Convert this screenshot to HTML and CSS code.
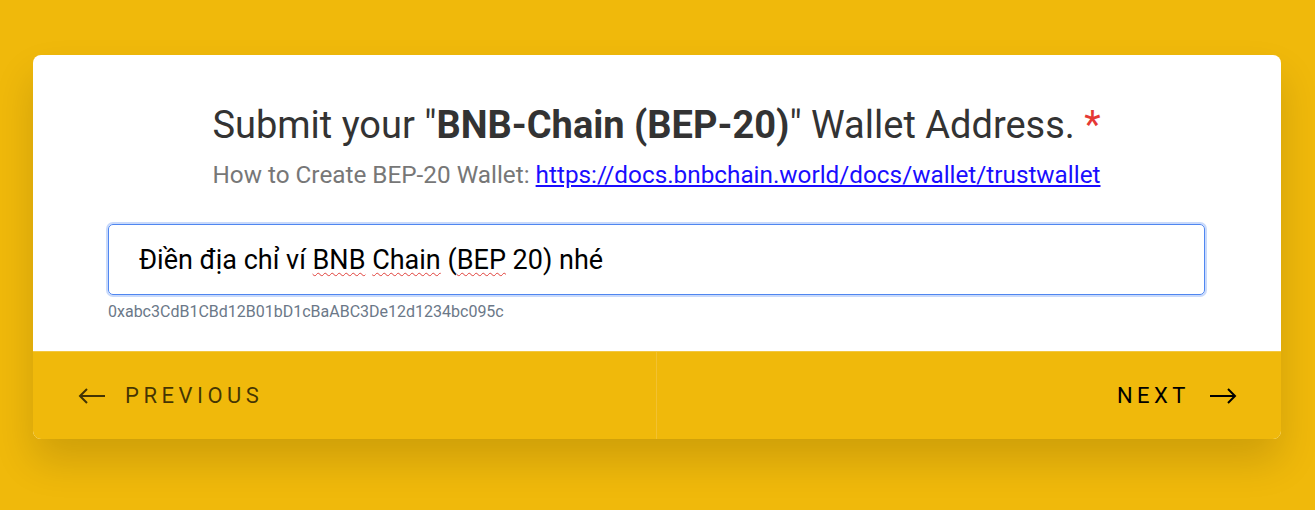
FILE: index.html
```html
<!DOCTYPE html>
<html lang="vi">
<head>
  <meta charset="UTF-8">
  <title>Submit Wallet Address</title>
  <meta name="viewport" content="width=device-width, initial-scale=1.0">
  <link rel="stylesheet" href="styles.css">
</head>
<body>
  <div class="card">
    <div class="card-body">
      <h1 class="title">Submit your "<b>BNB-Chain (BEP-20)</b>" Wallet Address. <span class="req">*</span></h1>
      <p class="sub">How to Create BEP-20 Wallet: <a href="#">https://docs.bnbchain.world/docs/wallet/trustwallet</a></p>

      <div class="field"><span>Điền địa chỉ ví <span class="typo">BNB</span> <span class="typo">Chain</span> (<span class="typo">BEP</span> 20) nhé</span></div>
      <div class="hint">0xabc3CdB1CBd12B01bD1cBaABC3De12d1234bc095c</div>
    </div>

    <div class="nav">
      <button class="nav-btn prev">
        <svg width="28" height="16" viewBox="0 0 28 16"><path d="M27 8H2M9 1L2 8l7 7" fill="none" stroke="currentColor" stroke-width="2"/></svg>
        <span>PREVIOUS</span>
      </button>
      <button class="nav-btn next">
        <span>NEXT</span>
        <svg width="28" height="16" viewBox="0 0 28 16"><path d="M1 8h25M19 1l7 7-7 7" fill="none" stroke="currentColor" stroke-width="2"/></svg>
      </button>
    </div>
  </div>
</body>
</html>
```

FILE: styles.css
```css
html { background: #f0b90b; }
body { margin: 0; min-height: 100vh; padding-top: 55px; box-sizing: border-box; font-family: Roboto, "Noto Sans", sans-serif; }

.card { margin: 0 34px 0 33px; background: #fff; border-radius: 8px; overflow: hidden; box-shadow: 0 22px 40px rgba(0, 0, 0, 0.14); }
.card-body { padding: 47px 76px 30px 75px; }

.title { margin: 0; text-align: center; font-size: 38px; font-weight: 400; line-height: 46px; color: #333; }
.title b { font-weight: 700; }
.req { color: #e53935; }

.sub { margin: 11px 0 0; text-align: center; font-size: 24.3px; line-height: 32px; color: #777; }
.sub a { color: #1a0dff; }

.field { margin-top: 33px; height: 69px; padding: 0 30px; border: 1px solid #4f86f0; border-radius: 5px; box-shadow: 0 0 0 2px #c9dafb; display: flex; align-items: center; font-size: 27px; color: #000; }
.typo { text-decoration: underline wavy #e0403a; text-decoration-thickness: 1px; text-underline-offset: 3px; }

.hint { margin-top: 7px; font-size: 16px; color: #6b7888; }

.nav { display: grid; grid-template-columns: 1fr 1fr; background: #f0b90b; border-top: 1px solid #f3c740; }
.nav-btn { height: 87px; display: flex; align-items: center; gap: 19px; border: 0; background: none; font-family: inherit; font-size: 22px; letter-spacing: 4.5px; cursor: pointer; }
.prev { padding: 0 0 0 45px; color: rgba(0, 0, 0, 0.72); border-right: 1px solid #f2c131; }
.next { padding: 0 44px 0 0; justify-content: flex-end; color: #000; }
```
